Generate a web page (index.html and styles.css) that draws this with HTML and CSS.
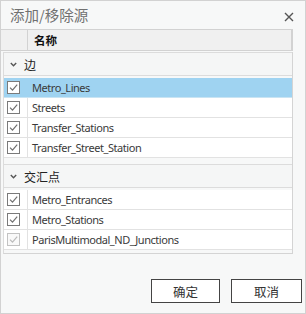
FILE: index.html
```html
<!DOCTYPE html>
<html lang="zh">
<head>
    <meta charset="UTF-8">
    <title>添加/移除源</title>
    <link rel="stylesheet" href="styles.css">
</head>
<body>
    <div class="dialog">
        <div class="title-bar">
            <span class="title">添加/移除源</span>
            <svg class="close" width="10" height="10" viewBox="0 0 10 10">
                <path d="M1 1 L9 9 M9 1 L1 9" stroke="#555" stroke-width="1.4" fill="none"/>
            </svg>
        </div>

        <div class="grid-head">
            <div class="col-check"></div>
            <div class="col-name">名称</div>
        </div>

        <div class="list">
            <div class="group">
                <svg class="chevron" width="7" height="5" viewBox="0 0 7 5">
                    <path d="M0.8 1 L3.5 3.7 L6.2 1" stroke="#555" stroke-width="1.4" fill="none"/>
                </svg>
                <span>边</span>
            </div>
            <div class="rows">
                <div class="row selected">
                    <div class="cell-check"><span class="box"><svg width="11" height="11" viewBox="0 0 11 11"><path d="M2 5.6 L4.5 8.2 L9.2 2.6" stroke="#707070" stroke-width="1.2" fill="none"/></svg></span></div>
                    <div class="cell-name">Metro_Lines</div>
                </div>
                <div class="row">
                    <div class="cell-check"><span class="box"><svg width="11" height="11" viewBox="0 0 11 11"><path d="M2 5.6 L4.5 8.2 L9.2 2.6" stroke="#707070" stroke-width="1.2" fill="none"/></svg></span></div>
                    <div class="cell-name">Streets</div>
                </div>
                <div class="row">
                    <div class="cell-check"><span class="box"><svg width="11" height="11" viewBox="0 0 11 11"><path d="M2 5.6 L4.5 8.2 L9.2 2.6" stroke="#707070" stroke-width="1.2" fill="none"/></svg></span></div>
                    <div class="cell-name">Transfer_Stations</div>
                </div>
                <div class="row">
                    <div class="cell-check"><span class="box"><svg width="11" height="11" viewBox="0 0 11 11"><path d="M2 5.6 L4.5 8.2 L9.2 2.6" stroke="#707070" stroke-width="1.2" fill="none"/></svg></span></div>
                    <div class="cell-name">Transfer_Street_Station</div>
                </div>
            </div>

            <div class="group second">
                <svg class="chevron" width="7" height="5" viewBox="0 0 7 5">
                    <path d="M0.8 1 L3.5 3.7 L6.2 1" stroke="#555" stroke-width="1.4" fill="none"/>
                </svg>
                <span>交汇点</span>
            </div>
            <div class="rows">
                <div class="row">
                    <div class="cell-check"><span class="box"><svg width="11" height="11" viewBox="0 0 11 11"><path d="M2 5.6 L4.5 8.2 L9.2 2.6" stroke="#707070" stroke-width="1.2" fill="none"/></svg></span></div>
                    <div class="cell-name">Metro_Entrances</div>
                </div>
                <div class="row">
                    <div class="cell-check"><span class="box"><svg width="11" height="11" viewBox="0 0 11 11"><path d="M2 5.6 L4.5 8.2 L9.2 2.6" stroke="#707070" stroke-width="1.2" fill="none"/></svg></span></div>
                    <div class="cell-name">Metro_Stations</div>
                </div>
                <div class="row">
                    <div class="cell-check"><span class="box disabled"><svg width="11" height="11" viewBox="0 0 11 11"><path d="M2 5.6 L4.5 8.2 L9.2 2.6" stroke="#bbb" stroke-width="1.2" fill="none"/></svg></span></div>
                    <div class="cell-name">ParisMultimodal_ND_Junctions</div>
                </div>
            </div>
        </div>

        <div class="footer">
            <button class="btn">确定</button>
            <button class="btn btn-cancel">取消</button>
        </div>
    </div>
</body>
</html>
```

FILE: styles.css
```css
body {
    margin: 0;
    background-color: #f7f8f8;
    font-family: "Noto Sans", "Noto Sans CJK SC", sans-serif;
    font-size: 11px;
    color: #333;
}
.dialog {
    width: 306px;
    height: 314px;
    box-sizing: border-box;
    border: 1px solid #d2d2d2;
    background-color: #f7f8f8;
    display: flex;
    flex-direction: column;
}
.title-bar {
    height: 28px;
    display: flex;
    align-items: center;
    justify-content: space-between;
    padding: 0 11px 0 9px;
}
.title {
    font-family: "Noto Sans CJK SC", sans-serif;
    font-size: 14.5px;
    color: #707070;
    margin-top: -2px;
}
.close {
    margin-top: 4px;
}
.grid-head {
    width: 292px;
    height: 22px;
    box-sizing: border-box;
    display: flex;
    background-color: #f0f0f0;
    border-top: 1px solid #d2d2d2;
    border-bottom: 1px solid #d2d2d2;
    border-right: 2px solid #d2d2d2;
}
.grid-head .col-check {
    width: 26px;
    border-right: 1px solid #d2d2d2;
}
.grid-head .col-name {
    padding-left: 6px;
    font-family: "Noto Sans CJK SC", sans-serif;
    font-weight: bold;
    font-size: 11.5px;
    line-height: 20px;
    color: #111;
}
.list {
    margin: 1px 0 0 2px;
    width: 290px;
    box-sizing: border-box;
    border-left: 1px solid #dcdcdc;
    border-right: 1px solid #d4d4d4;
    border-bottom: 1px solid #d4d4d4;
    padding-bottom: 3px;
}
.group {
    height: 24px;
    box-sizing: border-box;
    border-top: 1px solid #dcdcdc;
    border-bottom: 1px solid #dcdcdc;
    background-color: #f5f6f6;
    display: flex;
    align-items: center;
    font-family: "Noto Sans CJK SC", sans-serif;
    font-size: 12px;
    color: #222;
}
.group .chevron {
    margin: 0 7px 0 6px;
}
.group.second {
    margin-top: 6px;
}
.rows {
    margin-top: 2px;
    background-color: #fff;
}
.row {
    height: 20px;
    box-sizing: border-box;
    display: flex;
    border-bottom: 1px solid #e2e2e2;
}
.row.selected {
    background-color: #9fd3f1;
    border-bottom-color: #c9e4f3;
}
.cell-check {
    width: 24px;
    border-right: 1px solid #e2e2e2;
    display: flex;
    align-items: center;
    padding-left: 3px;
    box-sizing: border-box;
}
.row.selected .cell-check {
    border-right-color: #9fd3f1;
}
.box {
    width: 13px;
    height: 13px;
    box-sizing: border-box;
    border: 1px solid #7a7a7a;
    background-color: #fff;
    display: flex;
}
.box.disabled {
    border-color: #c2c2c2;
    background-color: #f9f9f9;
}
.cell-name {
    padding-left: 4px;
    line-height: 19px;
    letter-spacing: -0.45px;
    color: #3a3a3a;
}
.footer {
    margin-top: auto;
    display: flex;
    justify-content: flex-end;
    gap: 11px;
    padding: 0 3px 10px 0;
}
.btn {
    width: 69px;
    height: 24px;
    box-sizing: border-box;
    border: 1px solid #444;
    background-color: #fff;
    font-family: "Noto Sans CJK SC", sans-serif;
    font-size: 12.5px;
    color: #333;
    padding: 0;
}
.btn-cancel {
    width: 71px;
}
```
